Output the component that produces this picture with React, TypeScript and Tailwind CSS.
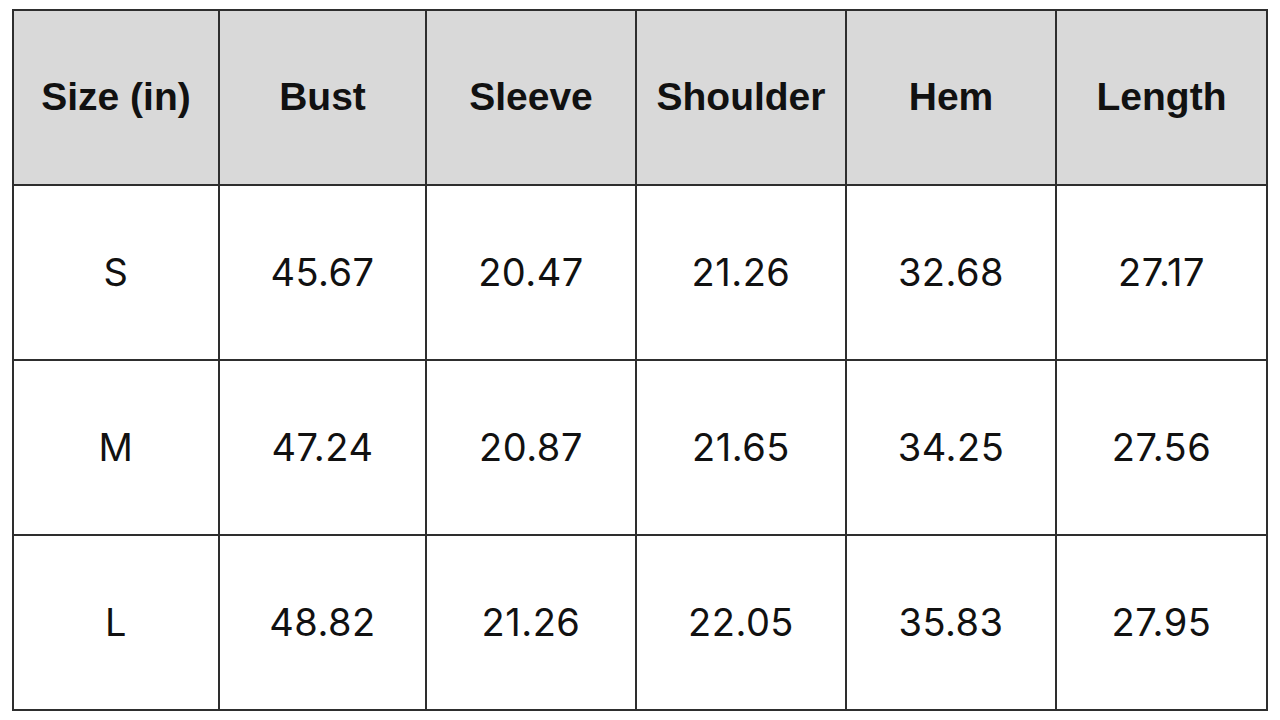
import React from 'react';

const headers = ['Size (in)', 'Bust', 'Sleeve', 'Shoulder', 'Hem', 'Length'];

const rows = [
  ['S', '45.67', '20.47', '21.26', '32.68', '27.17'],
  ['M', '47.24', '20.87', '21.65', '34.25', '27.56'],
  ['L', '48.82', '21.26', '22.05', '35.83', '27.95'],
];

const colWidths = ['w-[206px]', 'w-[207px]', 'w-[210px]', 'w-[210px]', 'w-[210px]', 'w-[211px]'];

const App: React.FC = () => {
  return (
    <div className="w-[1280px] h-[720px] bg-white pl-[12px] pt-[9px]">
      <table className="border-collapse table-fixed w-[1256px]">
        <colgroup>
          {colWidths.map((w, i) => (
            <col key={i} className={w} />
          ))}
        </colgroup>
        <thead>
          <tr className="h-[175px] bg-[#d9d9d9]">
            {headers.map((h) => (
              <th
                key={h}
                className="border-2 border-[#2e2e2e] text-center align-middle font-bold text-[39px] text-[#111] font-['Liberation_Sans',Arial,sans-serif]"
              >
                {h}
              </th>
            ))}
          </tr>
        </thead>
        <tbody>
          {rows.map((r) => (
            <tr key={r[0]} className="h-[175px]">
              {r.map((c, i) => (
                <td
                  key={i}
                  className="border-2 border-[#2e2e2e] text-center align-middle text-[38px] tracking-[0.5px] text-[#111] font-['Inter',sans-serif]"
                >
                  {c}
                </td>
              ))}
            </tr>
          ))}
        </tbody>
      </table>
    </div>
  );
};

export default App;
